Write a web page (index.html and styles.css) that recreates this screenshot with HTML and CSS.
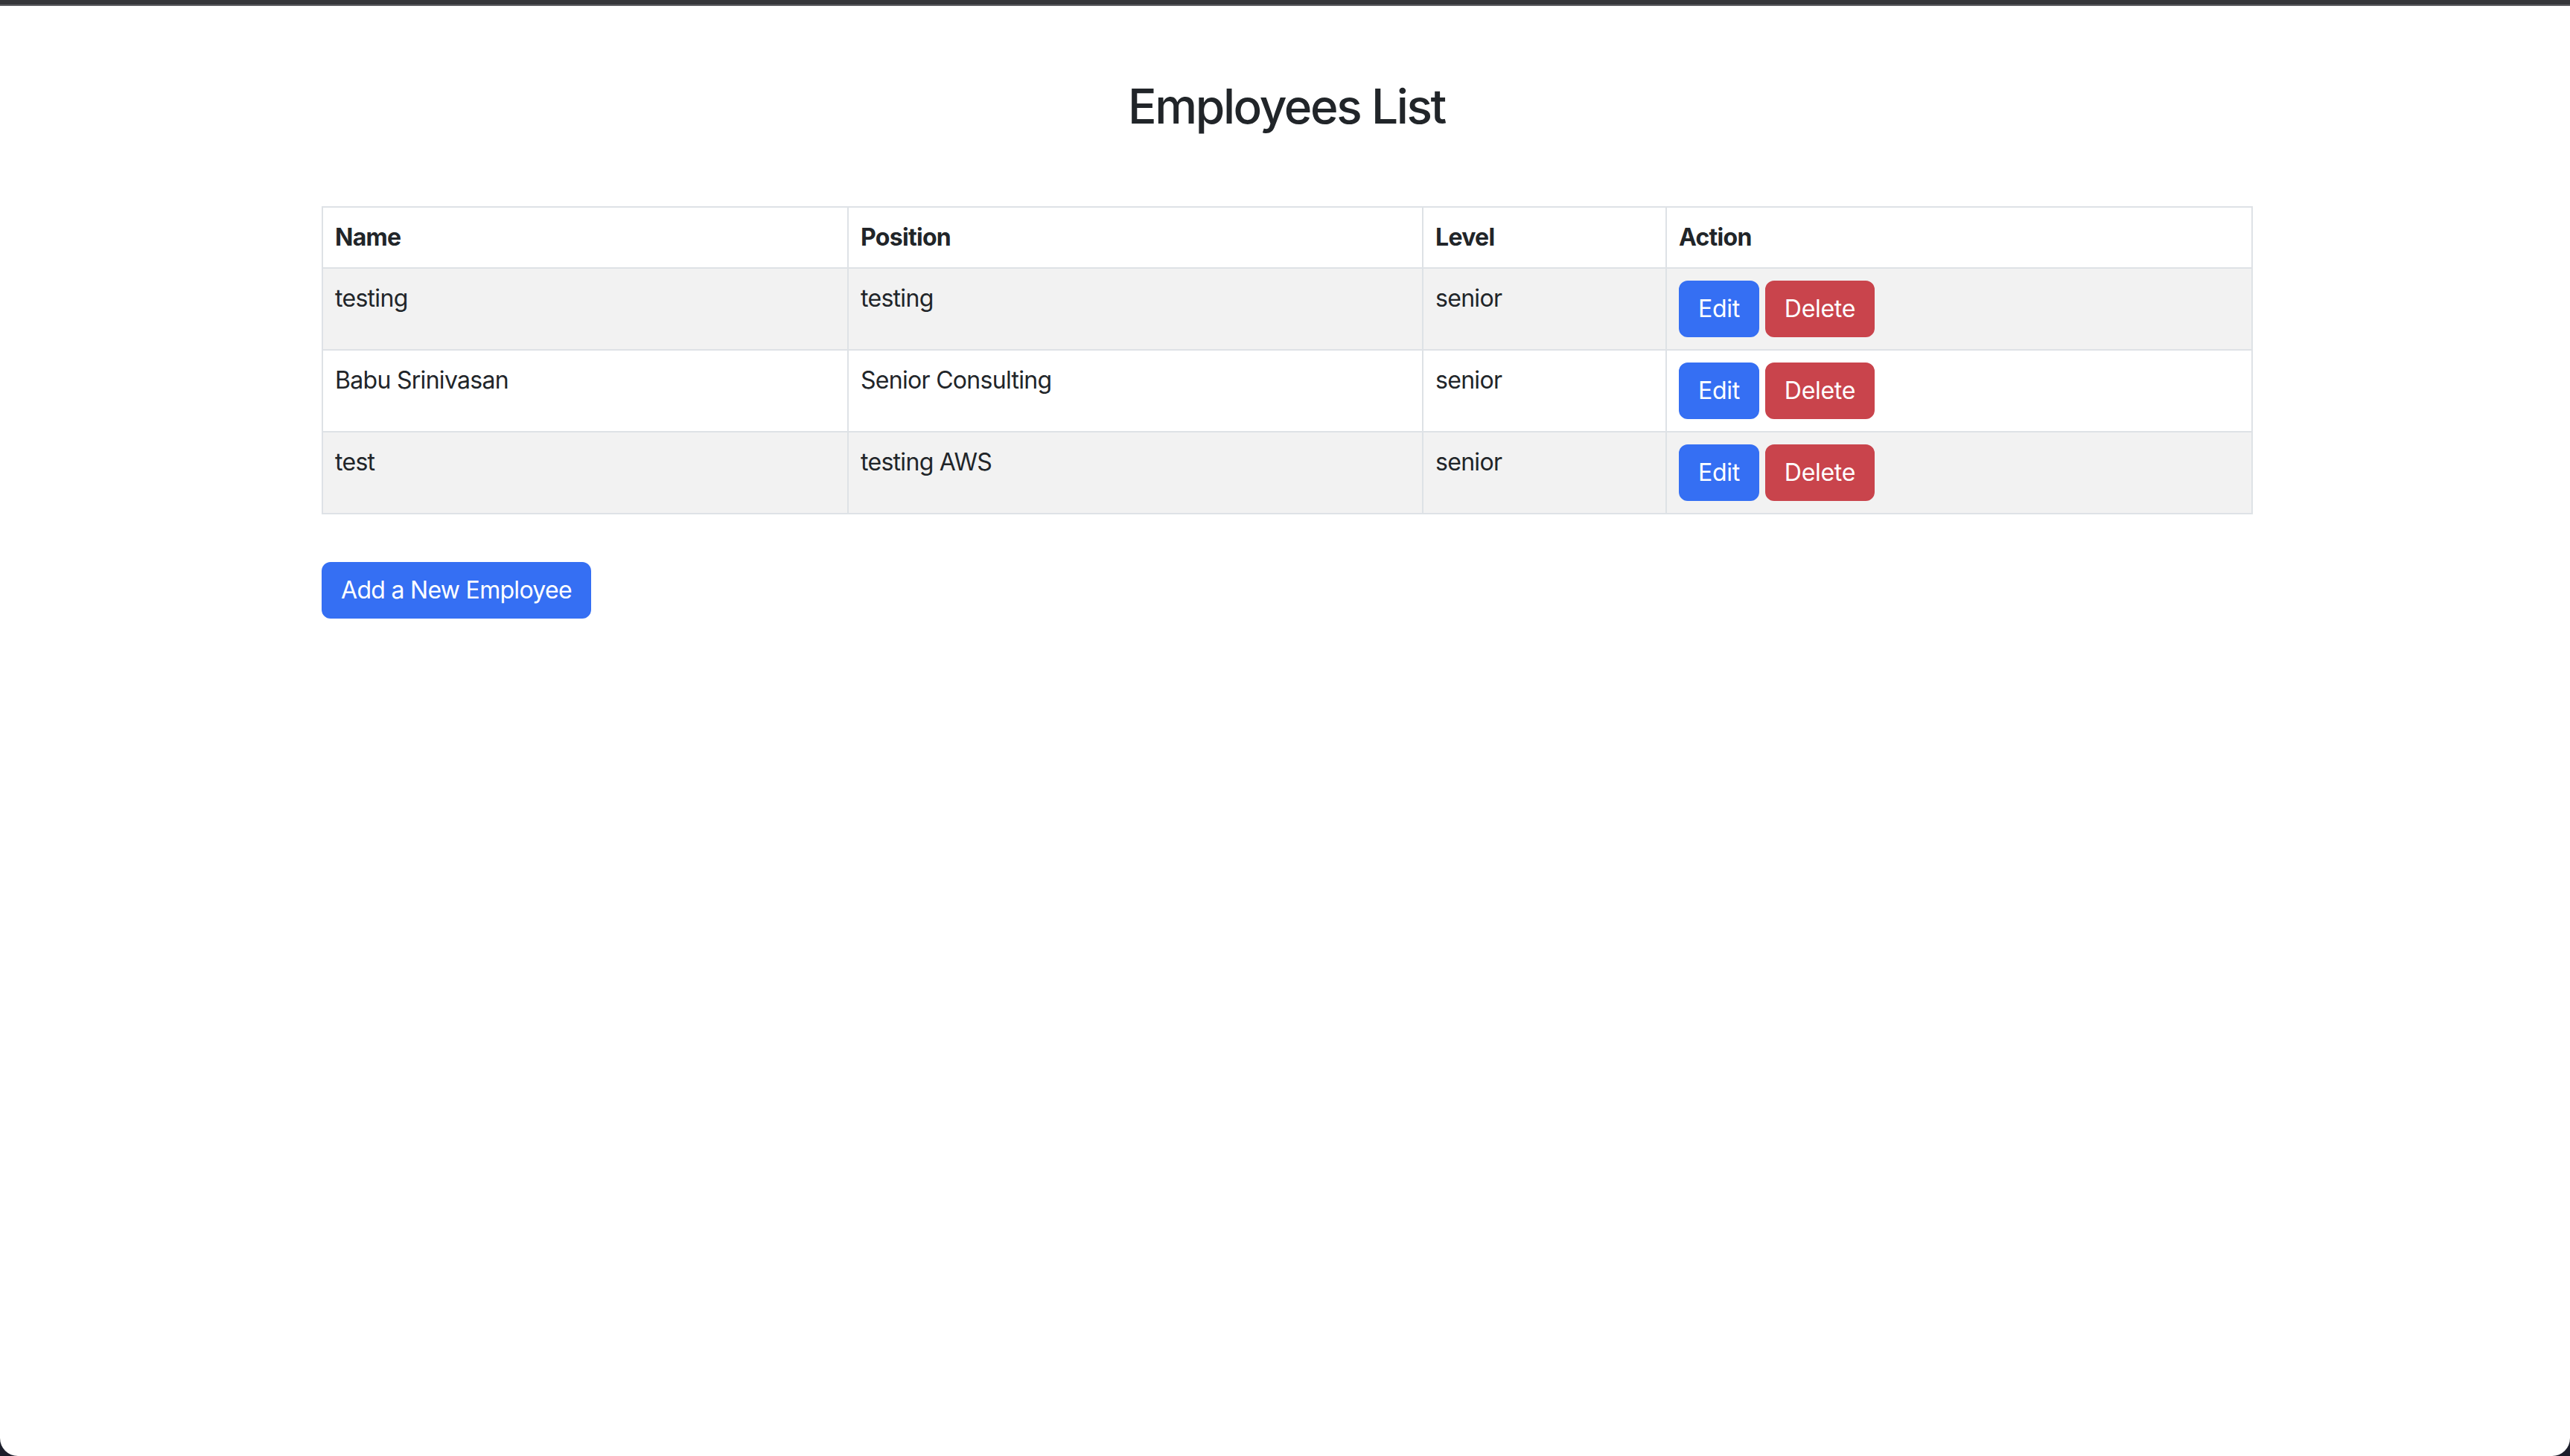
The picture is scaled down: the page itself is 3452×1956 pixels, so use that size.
FILE: index.html
```html
<!DOCTYPE html>
<html lang="en">
<head>
<meta charset="utf-8">
<title>Employees List</title>
<link rel="stylesheet" href="styles.css">
</head>
<body>
<div class="chrome-bar"></div>
<main class="container">
  <h2 class="title">Employees List</h2>
  <table class="table">
    <colgroup>
      <col class="col-name">
      <col class="col-position">
      <col class="col-level">
      <col class="col-action">
    </colgroup>
    <thead>
      <tr><th>Name</th><th>Position</th><th>Level</th><th>Action</th></tr>
    </thead>
    <tbody>
      <tr class="striped">
        <td>testing</td><td>testing</td><td>senior</td>
        <td><div class="actions"><button class="btn btn-primary btn-row">Edit</button><button class="btn btn-danger btn-row">Delete</button></div></td>
      </tr>
      <tr>
        <td>Babu Srinivasan</td><td>Senior Consulting</td><td>senior</td>
        <td><div class="actions"><button class="btn btn-primary btn-row">Edit</button><button class="btn btn-danger btn-row">Delete</button></div></td>
      </tr>
      <tr class="striped">
        <td>test</td><td>testing AWS</td><td>senior</td>
        <td><div class="actions"><button class="btn btn-primary btn-row">Edit</button><button class="btn btn-danger btn-row">Delete</button></div></td>
      </tr>
    </tbody>
  </table>
  <div class="add-row">
    <button class="btn btn-primary">Add a New Employee</button>
  </div>
</main>
</body>
</html>
```

FILE: styles.css
```css
html {
  background: #1c1e2b;
  height: 100%;
}

body {
  margin: 0;
  min-height: 100vh;
  box-sizing: border-box;
  background: #ffffff;
  border-radius: 0 0 24px 24px;
  overflow: hidden;
  font-family: Inter, "Liberation Sans", sans-serif;
  font-size: 32px;
  line-height: 48px;
  letter-spacing: -0.7px;
  color: #212529;
}

.chrome-bar {
  height: 6px;
  background: #35363a;
  border-bottom: 2px solid #5d5e62;
}

.container {
  width: 2592px;
  margin-left: 432px;
}

.title {
  margin: 96px 0 96px;
  text-align: center;
  font-size: 64px;
  line-height: 77px;
  font-weight: 500;
  letter-spacing: -2.4px;
}

.table {
  width: 2592px;
  border-collapse: collapse;
  table-layout: fixed;
  margin: 0;
}

.col-name { width: 706px; }
.col-position { width: 772px; }
.col-level { width: 327px; }
.col-action { width: 787px; }

.table th,
.table td {
  border: 2px solid #dee2e6;
  padding: 16px;
  text-align: left;
  vertical-align: top;
}

.table th {
  font-weight: 700;
}

.striped td {
  background: #f2f2f2;
}

.actions {
  display: flex;
  gap: 8px;
}

.btn {
  font-family: inherit;
  font-size: 32px;
  line-height: 48px;
  letter-spacing: -0.7px;
  padding: 12px 24px;
  border-radius: 12px;
  border: 2px solid transparent;
  color: #ffffff;
  margin: 0;
}

.btn-row {
  letter-spacing: -0.3px;
}

.btn-primary {
  background: #356ff3;
  border-color: #356ff3;
}

.btn-danger {
  background: #c9444c;
  border-color: #c9444c;
}

.add-row {
  margin-top: 64px;
}
```
